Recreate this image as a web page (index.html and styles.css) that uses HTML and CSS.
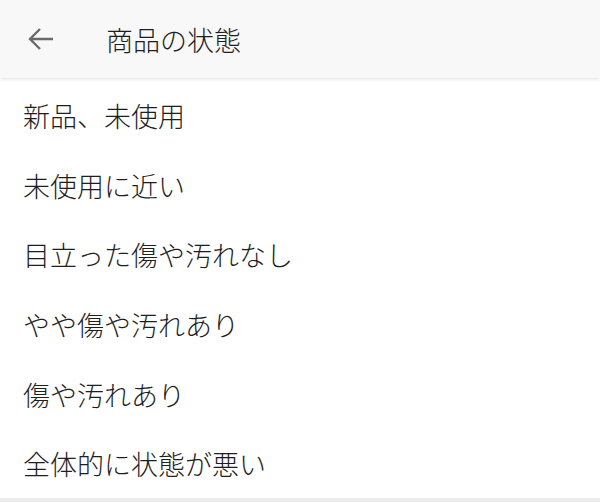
FILE: index.html
```html
<!DOCTYPE html>
<html lang="ja">
<head>
    <meta charset="UTF-8">
    <meta name="viewport" content="width=device-width, initial-scale=1.0">
    <title>商品の状態</title>
    <link rel="stylesheet" href="styles.css">
</head>
<body>
    <div class="screen">
        <header class="top-bar">
            <button class="back-btn" type="button" aria-label="戻る">
                <svg width="26" height="24" viewBox="0 0 26 24">
                    <path d="M2 12H25M12 2L2 12L12 22" fill="none" stroke="#6a6a6a" stroke-width="2.4"/>
                </svg>
            </button>
            <h1>商品の状態</h1>
        </header>

        <ul class="condition-list">
            <li>新品、未使用</li>
            <li>未使用に近い</li>
            <li>目立った傷や汚れなし</li>
            <li>やや傷や汚れあり</li>
            <li>傷や汚れあり</li>
            <li>全体的に状態が悪い</li>
        </ul>
    </div>
</body>
</html>
```

FILE: styles.css
```css
html, body {
    margin: 0;
    padding: 0;
    background: #fff;
}

body {
    font-family: "Noto Sans CJK JP", "Noto Sans", sans-serif;
    font-weight: 300;
    color: #1e1e1e;
}

.screen {
    width: 600px;
    height: 502px;
    overflow: hidden;
    display: flex;
    flex-direction: column;
    border-bottom: 4px solid #ececec;
    box-sizing: border-box;
}

.top-bar {
    height: 78px;
    flex-shrink: 0;
    display: flex;
    align-items: center;
    background: #f8f8f8;
    box-shadow: 0 1px 3px rgba(0, 0, 0, 0.12);
    position: relative;
    z-index: 1;
}

.back-btn {
    border: none;
    background: none;
    padding: 0;
    margin-left: 28px;
    width: 26px;
    height: 24px;
    display: flex;
}

.top-bar h1 {
    margin: 0 0 0 52px;
    font-size: 27px;
    font-weight: 300;
    color: #1e1e1e;
}

.condition-list {
    list-style: none;
    margin: 0;
    padding: 3px 0 0;
}

.condition-list li {
    height: 69.6px;
    display: flex;
    align-items: center;
    padding-left: 23px;
    font-size: 27px;
}
```
